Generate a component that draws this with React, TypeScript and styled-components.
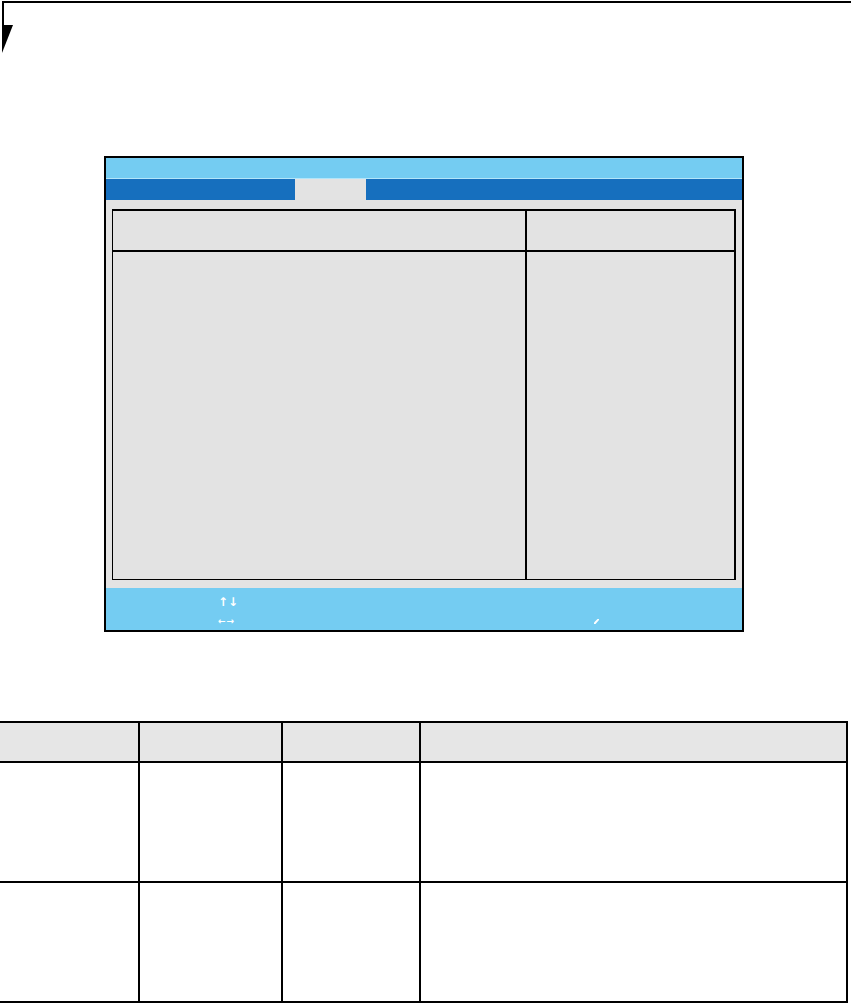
import React from "react";
import styled, { createGlobalStyle } from "styled-components";

const Global = createGlobalStyle`
  html, body { margin: 0; padding: 0; background: #ffffff; }
  body { font-family: "Liberation Sans", Arial, sans-serif; width: 851px; overflow: hidden; }
`;

const Page = styled.div`
  width: 851px;
  height: 1003px;
  display: flex;
  flex-direction: column;
`;

const PageHead = styled.div`
  margin: 1px 0 0 2px;
  height: 22px;
  border-top: 2px solid #000;
  border-left: 2px solid #000;
`;

const Tab = styled.svg`
  display: block;
  margin-left: 2px;
  width: 12px;
  height: 28px;
`;

const Frame = styled.div`
  margin: 103px 0 0 104px;
  width: 640px;
  height: 477px;
  box-sizing: border-box;
  border: 2px solid #000;
  display: flex;
  flex-direction: column;
  background: #e3e3e3;
`;

const TitleBar = styled.div`
  height: 20px;
  background: #74ccf2;
  border-bottom: 1px solid #b2e5fa;
`;

const MenuBar = styled.div`
  height: 21px;
  display: grid;
  grid-template-columns: 189px 71px 1fr;
`;

const MenuItem = styled.div<{ $active?: boolean }>`
  background: ${(p) => (p.$active ? "#e3e3e3" : "#166fbe")};
`;

const Body = styled.div`
  flex: 1;
  padding: 9px 6px 8px 6px;
  display: flex;
`;

const Panel = styled.div`
  flex: 1;
  box-sizing: border-box;
  border: 1px solid #000;
  border-top-width: 2px;
  border-right-width: 2px;
  display: grid;
  grid-template-columns: 414px 1fr;
  grid-template-rows: 41px 1fr;
`;

const PanelCell = styled.div<{ $divide?: boolean; $head?: boolean }>`
  border-right: ${(p) => (p.$divide ? "2px solid #000" : "none")};
  border-bottom: ${(p) => (p.$head ? "2px solid #000" : "none")};
`;

const Footer = styled.div`
  height: 42px;
  background: #74ccf2;
  box-sizing: border-box;
  padding-top: 4px;
  display: grid;
  grid-template-columns: 112px 376px 1fr;
  grid-template-rows: 19px 19px;
  align-items: center;
  color: #fff;
`;

const KeyGlyph = styled.span<{ $size: number; $gap: number }>`
  grid-column: 2;
  font-family: "DejaVu Sans", sans-serif;
  font-weight: bold;
  font-size: ${(p) => p.$size}px;
  line-height: 12px;
  letter-spacing: ${(p) => p.$gap}px;
  color: #fff;
`;

const Mark = styled.svg`
  grid-column: 3;
  width: 5px;
  height: 5px;
  margin-top: 2px;
  display: block;
`;

const Table = styled.div`
  margin-top: 89px;
  width: 848px;
  display: grid;
  grid-template-columns: 140px 143px 138px 427px;
  grid-template-rows: 40px 120px 120px;
  border-top: 2px solid #000;
`;

const Cell = styled.div<{ $head?: boolean }>`
  box-sizing: border-box;
  border-right: 2px solid #000;
  border-bottom: 2px solid #000;
  background: ${(p) => (p.$head ? "#e6e6e6" : "#ffffff")};
`;

const rows = [true, false, false];

export default function App() {
  return (
    <Page>
      <Global />
      <PageHead />
      <Tab viewBox="0 0 12 28">
        <polygon points="0,0 11,0 0,28" fill="#000" />
      </Tab>
      <Frame>
        <TitleBar />
        <MenuBar>
          <MenuItem />
          <MenuItem $active />
          <MenuItem />
        </MenuBar>
        <Body>
          <Panel>
            <PanelCell $divide $head />
            <PanelCell $head />
            <PanelCell $divide />
            <PanelCell />
          </Panel>
        </Body>
        <Footer>
          <KeyGlyph $size={12} $gap={0}>↑↓</KeyGlyph>
          <span />
          <KeyGlyph $size={9} $gap={1}>←→</KeyGlyph>
          <Mark viewBox="0 0 5 5">
            <polygon points="0,5 0,3.5 3.5,0 5,0 5,1 1.5,5" fill="#fff" />
          </Mark>
        </Footer>
      </Frame>
      <Table>
        {rows.map((head, r) =>
          [0, 1, 2, 3].map((c) => <Cell key={`${r}-${c}`} $head={head} />)
        )}
      </Table>
    </Page>
  );
}
